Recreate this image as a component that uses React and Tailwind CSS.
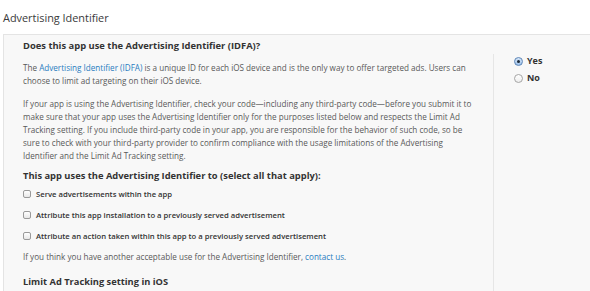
function Checkbox() {
  return <span className="inline-block w-[8px] h-[8px] rounded-[2px] border border-[#9a9a9a] bg-gradient-to-b from-white to-[#e8e8e8] shrink-0" />;
}

function Radio({ checked }) {
  return checked ? (
    <span className="inline-flex items-center justify-center w-[9px] h-[9px] rounded-full border border-[#5d86b8] bg-gradient-to-b from-[#d7e6f7] to-[#9dc1ea] shrink-0">
      <span className="w-[3px] h-[3px] rounded-full bg-[#1d2a3a]" />
    </span>
  ) : (
    <span className="inline-block w-[9px] h-[9px] rounded-full border border-[#a5a5a5] bg-gradient-to-b from-white to-[#eeeeee] shrink-0" />
  );
}

export default function App() {
  const font = { fontFamily: '"Open Sans", "Liberation Sans", sans-serif' };
  return (
    <div className="w-[590px] h-[291px] bg-white overflow-hidden text-[#585858]" style={font}>
      <h2 className="h-[34px] pl-[3px] pt-[10px] text-[10.9px] leading-[16px] text-[#3a3a3a]">Advertising Identifier</h2>
      <div className="ml-[3px] border-t border-l border-[#e4e4e4] bg-[#f8f8f8] flex h-[260px]">
        <div className="w-[489px] pl-[19px] pt-[2px] pr-[16px]">
          <h3 className="text-[9.4px] leading-[18px] font-bold text-[#333]">Does this app use the Advertising Identifier (IDFA)?</h3>
          <p className="mt-[6px] text-[8.15px] leading-[13px]">
            The <span className="text-[#2a7cc0]">Advertising Identifier (IDFA)</span> is a unique ID for each iOS device and is the only way to offer targeted ads. Users can choose to limit ad targeting on their iOS device.
          </p>
          <p className="mt-[10px] text-[8.15px] leading-[13px]">
            If your app is using the Advertising Identifier, check your code—including any third-party code—before you submit it to make sure that your app uses the Advertising Identifier only for the purposes listed below and respects the Limit Ad Tracking setting. If you include third-party code in your app, you are responsible for the behavior of such code, so be sure to check with your third-party provider to confirm compliance with the usage limitations of the Advertising Identifier and the Limit Ad Tracking setting.
          </p>
          <h3 className="mt-[6px] text-[9.35px] leading-[16px] font-bold text-[#333]">This app uses the Advertising Identifier to (select all that apply):</h3>
          <div className="mt-[4px] flex flex-col gap-[9px] text-[7.7px] leading-[12px] font-semibold text-[#333]">
            <label className="flex items-center gap-[5px]"><Checkbox />Serve advertisements within the app</label>
            <label className="flex items-center gap-[5px]"><Checkbox />Attribute this app installation to a previously served advertisement</label>
            <label className="flex items-center gap-[5px]"><Checkbox />Attribute an action taken within this app to a previously served advertisement</label>
          </div>
          <p className="mt-[9px] text-[8.15px] leading-[12px]">
            If you think you have another acceptable use for the Advertising Identifier, <span className="text-[#2a7cc0]">contact us</span>.
          </p>
          <h3 className="mt-[11px] text-[9.3px] leading-[16px] font-bold text-[#333]">Limit Ad Tracking setting in iOS</h3>
        </div>
        <div className="flex-1 mt-[19px] border-l border-[#e6e6e6] pl-[20px] pt-[1px]">
          <div className="flex flex-col gap-[5px] text-[9px] leading-[12px] font-bold text-[#333]">
            <label className="flex items-center gap-[4px]"><Radio checked />Yes</label>
            <label className="flex items-center gap-[4px]"><Radio />No</label>
          </div>
        </div>
      </div>
    </div>
  );
}
